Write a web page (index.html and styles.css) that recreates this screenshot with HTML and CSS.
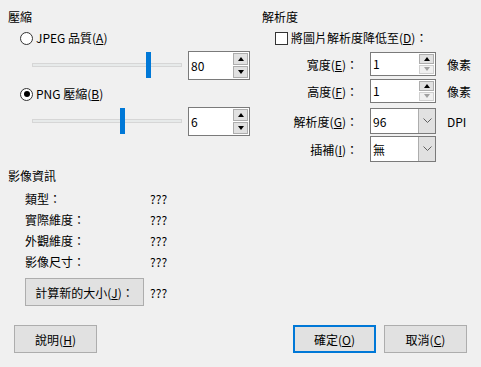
FILE: index.html
```html
<!DOCTYPE html>
<html lang="zh-Hant">
<head>
<meta charset="utf-8">
<link rel="stylesheet" href="styles.css">
</head>
<body>
<div class="dialog">
  <div class="top">
    <section class="compress">
      <div class="title">壓縮</div>
      <div class="opt first"><span class="radio"></span><span>JPEG 品質(<u>A</u>)</span></div>
      <div class="slider-row">
        <div class="slider"><div class="track"></div><div class="thumb" style="left:114px"></div></div>
        <div class="spin big"><span class="val">80</span><div class="spin-btns"><span class="sb up"></span><span class="sb down"></span></div></div>
      </div>
      <div class="opt second"><span class="radio checked"></span><span>PNG 壓縮(<u>B</u>)</span></div>
      <div class="slider-row second">
        <div class="slider"><div class="track"></div><div class="thumb" style="left:88px"></div></div>
        <div class="spin big"><span class="val">6</span><div class="spin-btns"><span class="sb up"></span><span class="sb down"></span></div></div>
      </div>
    </section>
    <section class="resolution">
      <div class="title">解析度</div>
      <div class="check-row"><span class="checkbox"></span><span>將圖片解析度降低至(<u>D</u>)：</span></div>
      <div class="frow r1"><span class="flabel">寬度(<u>E</u>)：</span><div class="spin small"><span class="val">1</span><div class="spin-btns"><span class="sb up"></span><span class="sb down dis"></span></div></div><span class="unit">像素</span></div>
      <div class="frow r2"><span class="flabel">高度(<u>F</u>)：</span><div class="spin small"><span class="val">1</span><div class="spin-btns"><span class="sb up"></span><span class="sb down dis"></span></div></div><span class="unit">像素</span></div>
      <div class="frow r3"><span class="flabel">解析度(<u>G</u>)：</span><div class="combo"><span class="val">96</span><span class="drop"><svg width="9" height="6" viewBox="0 0 9 6"><polyline points="0.5,0.5 4.5,4.5 8.5,0.5" fill="none" stroke="#606060" stroke-width="1"/></svg></span></div><span class="unit">DPI</span></div>
      <div class="frow r4"><span class="flabel">插補(<u>I</u>)：</span><div class="combo"><span class="val">無</span><span class="drop"><svg width="9" height="6" viewBox="0 0 9 6"><polyline points="0.5,0.5 4.5,4.5 8.5,0.5" fill="none" stroke="#606060" stroke-width="1"/></svg></span></div></div>
    </section>
  </div>
  <section class="info">
    <div class="title">影像資訊</div>
    <div class="irow"><span class="ilabel">類型：</span><span>???</span></div>
    <div class="irow"><span class="ilabel">實際維度：</span><span>???</span></div>
    <div class="irow"><span class="ilabel">外觀維度：</span><span>???</span></div>
    <div class="irow"><span class="ilabel">影像尺寸：</span><span>???</span></div>
    <div class="calc-row"><button class="btn calc">計算新的大小(<u>J</u>)：</button><span>???</span></div>
  </section>
  <div class="buttons">
    <button class="btn">說明(<u>H</u>)</button>
    <button class="btn default">確定(<u>O</u>)</button>
    <button class="btn">取消(<u>C</u>)</button>
  </div>
</div>
</body>
</html>
```
FILE: styles.css
```css
* { box-sizing: border-box; }
html, body {
  margin: 0;
  background: #f0f0f0;
}
body {
  width: 481px;
  height: 367px;
  overflow: hidden;
  font-family: "Noto Sans CJK TC", "Noto Sans", sans-serif;
  font-size: 12px;
  color: #000;
}
u { text-decoration: underline; text-underline-offset: 1px; }
.dialog { padding-top: 9px; }
.title { height: 16px; line-height: 16px; }
.top { display: flex; align-items: flex-start; padding-left: 8px; height: 153px; }
.compress { width: 242px; }
.resolution { margin-left: 12px; }

.opt {
  display: flex; align-items: center; gap: 3px;
  height: 16px; padding-left: 12px; line-height: 16px;
}
.opt.first { margin-top: 5px; }
.opt.second { margin-top: 6px; }
.radio {
  width: 13px; height: 13px; border-radius: 50%;
  border: 1px solid #333; background: #fff;
  display: flex; align-items: center; justify-content: center;
}
.radio.checked::after {
  content: ""; width: 6px; height: 6px; border-radius: 50%; background: #000;
}
.slider-row { display: flex; margin-top: 5px; height: 29px; gap: 6px; padding-left: 24px; }
.slider-row.second { margin-top: 5px; }
.slider { position: relative; width: 150px; height: 29px; }
.track {
  position: absolute; left: 0; right: 0; top: 12px; height: 4px;
  background: #e7eaea; border: 1px solid #d6d6d6;
}
.thumb {
  position: absolute; top: 1px; width: 5px; height: 26px; background: #0078d7;
}
.spin {
  display: flex; align-items: center; background: #fff; border: 1px solid #7a7a7a;
}
.spin .val { flex: 1; padding-left: 2px; line-height: 14px; }
.spin.big { width: 62px; height: 29px; }
.spin.small { width: 66px; height: 24px; }
.spin-btns {
  display: flex; flex-direction: column; gap: 1px; padding: 1px 1px 1px 0; height: 100%;
  justify-content: center;
}
.sb {
  width: 15px; flex: 1; max-height: 12px; background: #e1e1e1; border: 1px solid #adadad;
  display: flex; align-items: center; justify-content: center;
}
.sb.up::after {
  content: ""; border-left: 3.5px solid transparent; border-right: 3.5px solid transparent;
  border-bottom: 4px solid #000;
}
.sb.down::after {
  content: ""; border-left: 3.5px solid transparent; border-right: 3.5px solid transparent;
  border-top: 4px solid #000;
}
.sb.dis { background: #f0f0f0; border-color: #cfcfcf; }
.sb.dis::after { border-top-color: #a0a0a0; }
.spin.small .sb { max-height: 10px; width: 15px; }
.spin.small .spin-btns { padding: 1px 1px 1px 0; }

.check-row {
  display: flex; align-items: center; gap: 3px;
  height: 16px; margin-top: 5px; padding-left: 13px; line-height: 16px;
}
.checkbox { width: 13px; height: 13px; border: 1px solid #333; background: #fff; }

.frow { display: flex; align-items: center; }
.flabel { width: 96px; text-align: right; margin-right: 12px; }
.unit { margin-left: 11px; }
.frow.r1 { margin-top: 6px; }
.frow.r2 { margin-top: 3px; }
.frow.r3 { margin-top: 5px; }
.frow.r4 { margin-top: 2px; }
.combo {
  width: 66px; height: 26px; display: flex; align-items: stretch;
  background: #fff; border: 1px solid #7a7a7a;
}
.combo .val { flex: 1; padding-left: 2px; display: flex; align-items: center; }
.combo .drop {
  width: 17px; background: #e1e1e1; border-left: 1px solid #adadad;
  display: flex; align-items: center; justify-content: center;
}

.info { margin-top: 6px; padding-left: 8px; }
.irow { display: flex; height: 21px; align-items: center; padding-left: 17px; }
.info .title + .irow { margin-top: 4px; }
.ilabel { width: 125px; }
.calc-row { display: flex; align-items: center; gap: 6px; margin-top: 6px; padding-left: 17px; }

.btn {
  font: inherit; color: #000; height: 28px; width: 83px; padding: 0;
  background: #e1e1e1; border: 1px solid #adadad; border-radius: 0;
}
.btn.calc { width: 119px; }
.btn.default { border: 2px solid #0078d7; margin-left: auto; }
.buttons { display: flex; gap: 8px; margin-top: 19px; padding: 0 14px; }
```
